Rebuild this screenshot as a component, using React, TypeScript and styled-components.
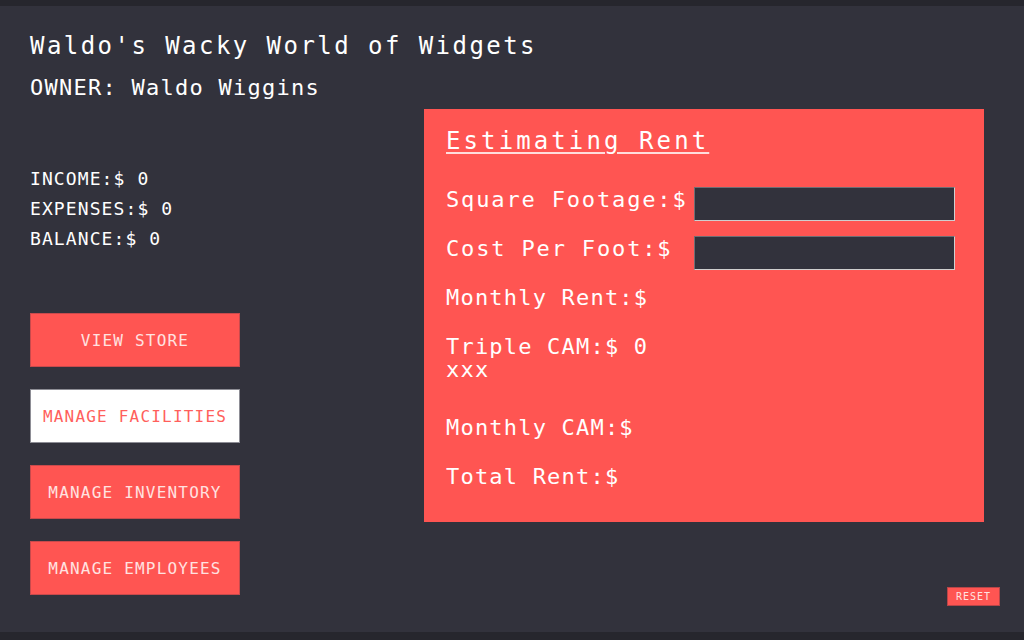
import React from "react";
import styled, { createGlobalStyle } from "styled-components";

const GlobalStyle = createGlobalStyle`
  html, body {
    margin: 0;
    padding: 0;
    background: #32323c;
  }
  * { box-sizing: border-box; }
`;

const mono = `"DejaVu Sans Mono", "Liberation Mono", monospace`;
const red = "#ff5552";
const ink = "#32323c";

const Screen = styled.div`
  height: 640px;
  display: flex;
  flex-direction: column;
  background: ${ink};
  border-top: 6px solid #26262d;
  border-bottom: 8px solid #26262d;
  font-family: ${mono};
  color: #ffffff;
`;

const Header = styled.header`
  padding: 26px 30px 0;
  height: 103px;
`;

const Title = styled.h1`
  margin: 0;
  font-size: 24px;
  font-weight: normal;
  line-height: normal;
  letter-spacing: 2.45px;
`;

const Owner = styled.h2`
  margin: 15px 0 0;
  font-size: 22px;
  font-weight: normal;
  line-height: normal;
  letter-spacing: 1.25px;
`;

const Body = styled.main`
  flex: 1;
  display: flex;
  padding: 0 24px 26px 30px;
`;

const Sidebar = styled.section`
  width: 394px;
  display: flex;
  flex-direction: column;
  padding-top: 55px;
`;

const Stats = styled.div`
  display: flex;
  flex-direction: column;
`;

const Stat = styled.div`
  font-size: 18px;
  line-height: 30px;
  letter-spacing: 1.1px;
`;

const Nav = styled.nav`
  margin-top: 59px;
  display: flex;
  flex-direction: column;
  gap: 22px;
`;

const NavButton = styled.button<{ $active?: boolean }>`
  width: 210px;
  height: 54px;
  padding: 0;
  font-family: ${mono};
  font-size: 16px;
  letter-spacing: 1.2px;
  text-transform: uppercase;
  background: ${(p) => (p.$active ? "#ffffff" : red)};
  color: ${(p) => (p.$active ? "#ff5f5c" : "#ffe2e0")};
  border: 1px solid ${(p) => (p.$active ? "#8d8d95" : "#c94a4c")};
  cursor: pointer;
`;

const RightColumn = styled.section`
  flex: 1;
  display: flex;
  flex-direction: column;
  align-items: flex-start;
`;

const Panel = styled.div`
  width: 560px;
  height: 413px;
  background: ${red};
  padding: 18px 22px 0;
  display: flex;
  flex-direction: column;
`;

const PanelTitle = styled.h3`
  margin: 0 0 32px;
  font-size: 24px;
  font-weight: normal;
  line-height: normal;
  letter-spacing: 3.1px;
  text-decoration: underline;
  text-underline-offset: 3px;
  text-decoration-thickness: 2px;
  text-decoration-color: rgba(255, 255, 255, 0.8);
`;

const Row = styled.div`
  min-height: 49px;
  display: flex;
  align-items: flex-start;
`;

const Label = styled.span<{ $width?: number; $tight?: boolean }>`
  display: block;
  width: ${(p) => (p.$width ? `${p.$width}px` : "auto")};
  font-size: 22px;
  line-height: 26px;
  letter-spacing: ${(p) => (p.$tight ? "1.2px" : "1.85px")};
  white-space: nowrap;
`;

const Note = styled.span`
  display: block;
  font-size: 22px;
  line-height: 20px;
  letter-spacing: 1.2px;
`;

const Stack = styled.div`
  min-height: 81px;
  display: flex;
  flex-direction: column;
`;

const Field = styled.input`
  width: 261px;
  height: 34px;
  margin: 0;
  padding: 0 6px;
  background: ${ink};
  color: #ffffff;
  font-family: ${mono};
  font-size: 16px;
  border-style: solid;
  border-width: 1px;
  border-color: #6e6e74 #cfcfcf #cfcfcf #6e6e74;
  outline: none;
`;

const Reset = styled.button`
  margin-top: auto;
  align-self: flex-end;
  width: 53px;
  height: 19px;
  padding: 0;
  font-family: ${mono};
  font-size: 10px;
  letter-spacing: 1px;
  background: ${red};
  color: #ffe2e0;
  border: 1px solid #b84548;
  cursor: pointer;
`;

const navItems = [
  { label: "View Store", active: false },
  { label: "Manage Facilities", active: true },
  { label: "Manage Inventory", active: false },
  { label: "Manage Employees", active: false },
];

export default function App() {
  return (
    <>
      <GlobalStyle />
      <Screen>
        <Header>
          <Title>Waldo's Wacky World of Widgets</Title>
          <Owner>OWNER: Waldo Wiggins</Owner>
        </Header>
        <Body>
          <Sidebar>
            <Stats>
              <Stat>INCOME:$ 0</Stat>
              <Stat>EXPENSES:$ 0</Stat>
              <Stat>BALANCE:$ 0</Stat>
            </Stats>
            <Nav>
              {navItems.map((item) => (
                <NavButton key={item.label} $active={item.active}>
                  {item.label}
                </NavButton>
              ))}
            </Nav>
          </Sidebar>
          <RightColumn>
            <Panel>
              <PanelTitle>Estimating Rent</PanelTitle>
              <Row>
                <Label $width={248}>Square Footage:$</Label>
                <Field type="text" />
              </Row>
              <Row>
                <Label $width={248}>Cost Per Foot:$</Label>
                <Field type="text" />
              </Row>
              <Row>
                <Label $tight>Monthly Rent:$</Label>
              </Row>
              <Stack>
                <Label $tight>Triple CAM:$ 0</Label>
                <Note>xxx</Note>
              </Stack>
              <Row>
                <Label $tight>Monthly CAM:$</Label>
              </Row>
              <Row>
                <Label $tight>Total Rent:$</Label>
              </Row>
            </Panel>
            <Reset>RESET</Reset>
          </RightColumn>
        </Body>
      </Screen>
    </>
  );
}
